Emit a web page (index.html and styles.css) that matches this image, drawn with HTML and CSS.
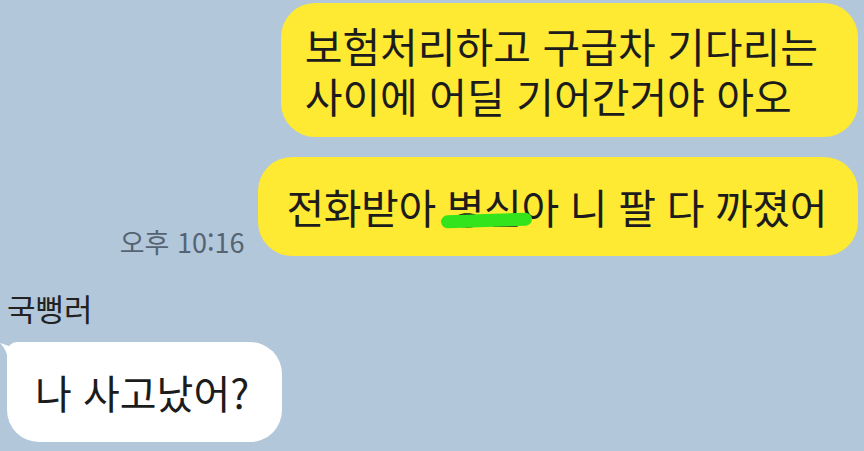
FILE: index.html
```html
<!DOCTYPE html>
<html lang="ko">
<head>
    <meta charset="UTF-8">
    <title>채팅</title>
    <link rel="stylesheet" href="styles.css">
</head>
<body>
    <div class="chat">
        <div class="row row-me">
            <div class="bubble bubble-me bubble-two">보험처리하고 구급차 기다리는<br>사이에 어딜 기어간거야 아오</div>
        </div>

        <div class="row row-me row-gap">
            <span class="time">오후 10:16</span>
            <div class="bubble bubble-me bubble-one">전화받아 <span class="scribble">병신</span>아 니 팔 다 까졌어</div>
        </div>

        <div class="friend">
            <div class="name">국뻥러</div>
            <div class="bubble bubble-friend">
                <svg class="tail" width="16" height="18" viewBox="0 0 16 18">
                    <path d="M0 1 Q8 3 14 7 L16 7 L16 18 L8 18 Q7 8 0 1 Z" fill="#ffffff"/>
                </svg>
                나 사고났어?
            </div>
        </div>
    </div>
</body>
</html>
```

FILE: styles.css
```css
body {
    margin: 0;
    background-color: #b2c7d9;
    font-family: 'Noto Sans CJK KR', 'Noto Sans', sans-serif;
    color: #1c1c1c;
    overflow: hidden;
}

.chat {
    display: flex;
    flex-direction: column;
    padding: 3px 6px 0 7px;
}

.row {
    display: flex;
}

.row-me {
    justify-content: flex-end;
    align-items: flex-end;
    gap: 14px;
}

.row-gap {
    margin-top: 20px;
}

.bubble {
    font-size: 41px;
    line-height: 50px;
    white-space: nowrap;
}

.bubble-me {
    background-color: #fee933;
    border-radius: 34px;
}

.bubble-two {
    padding: 17px 40px 17px 24px;
}

.bubble-one {
    padding: 24px 31px 25px 28px;
    letter-spacing: -0.4px;
}

.time {
    font-size: 27px;
    line-height: 30px;
    color: #566373;
    margin-bottom: -1px;
}

.scribble {
    position: relative;
}

.scribble::after {
    content: "";
    position: absolute;
    left: -6px;
    right: -10px;
    bottom: 9px;
    height: 13px;
    border-radius: 7px;
    background-color: #33e41c;
    transform: rotate(-2deg);
}

.friend {
    margin-top: 32px;
}

.name {
    font-size: 31px;
    line-height: 40px;
    color: #222;
}

.bubble-friend {
    position: relative;
    display: inline-block;
    margin-top: 14px;
    background-color: #ffffff;
    border-radius: 10px 32px 32px 32px;
    padding: 25px 33px 25px 28px;
    font-size: 40px;
}

.tail {
    position: absolute;
    left: -7px;
    top: 0;
}
```
